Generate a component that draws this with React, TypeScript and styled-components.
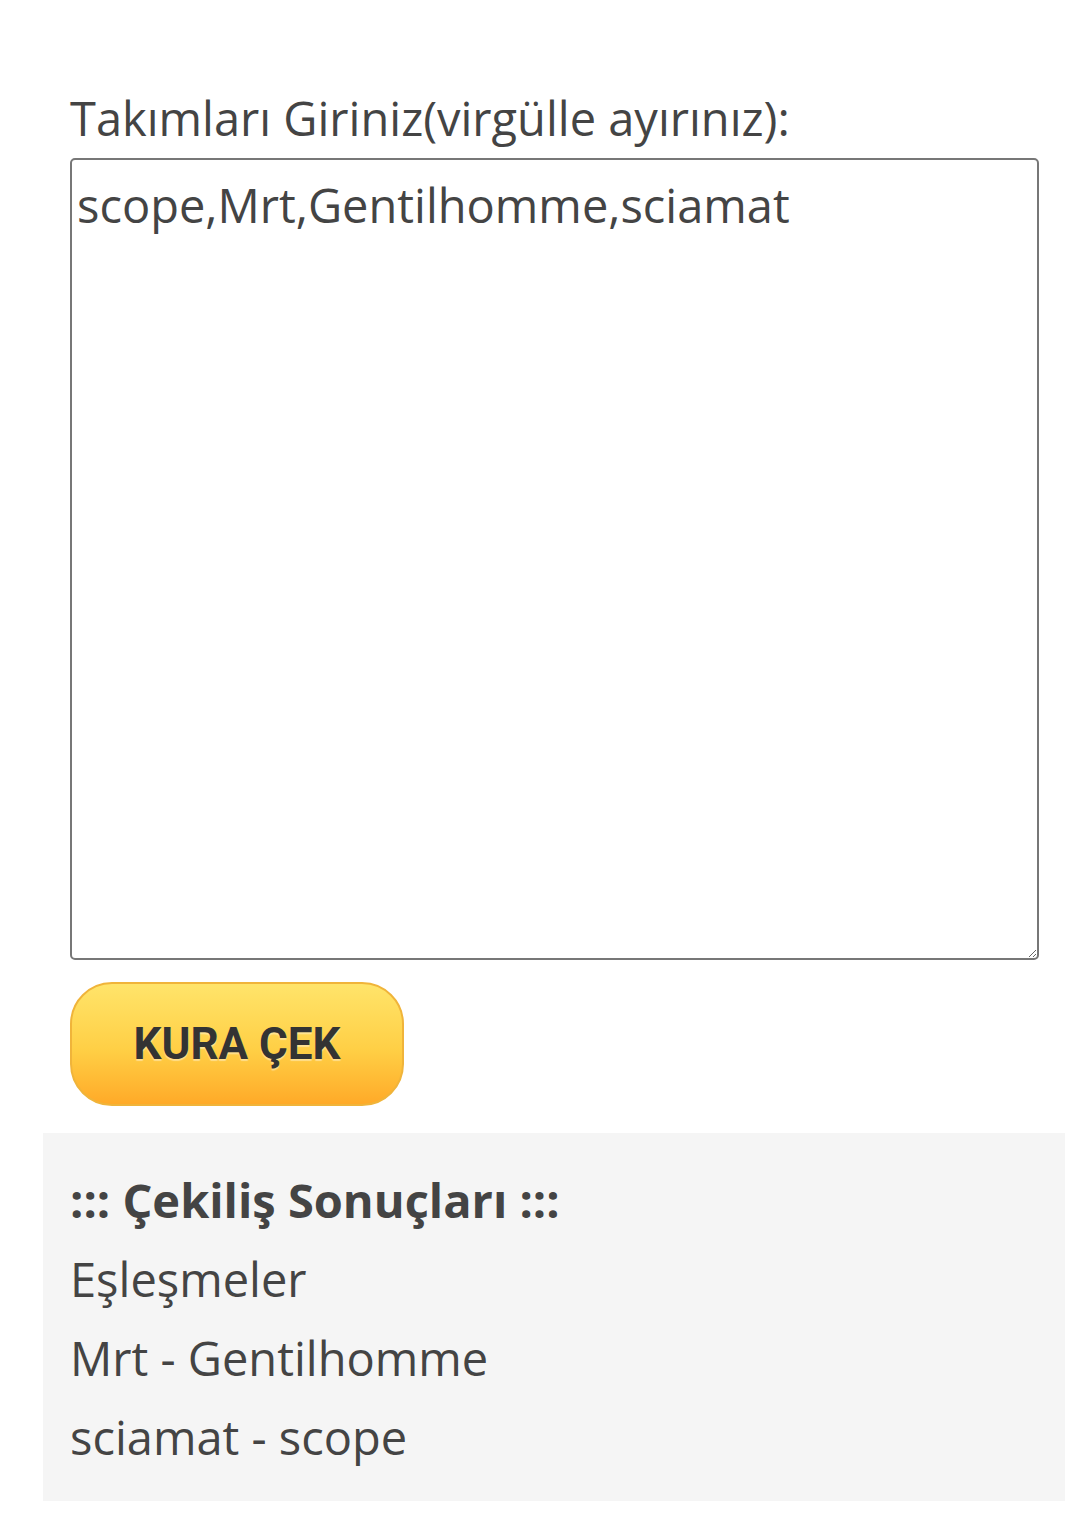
import styled, { createGlobalStyle } from "styled-components";

const GlobalStyle = createGlobalStyle`
  html, body {
    margin: 0;
    padding: 0;
    background: #fff;
  }
  body {
    font-family: "Open Sans", "Noto Sans", sans-serif;
    color: #444;
  }
`;

const Page = styled.div`
  padding: 85px 15px 16px 43px;
`;

const Form = styled.div`
  display: flex;
  flex-direction: column;
  padding: 0 27px;
`;

const Label = styled.label`
  font-size: 47px;
  line-height: 66px;
  color: #444;
  margin-bottom: 7px;
`;

const TeamsInput = styled.textarea`
  box-sizing: border-box;
  width: 969px;
  height: 802px;
  border: 2px solid #777;
  border-radius: 5px;
  padding: 12px 5px;
  font-family: "Open Sans", "Noto Sans", sans-serif;
  font-size: 47px;
  line-height: 66px;
  color: #444;
  resize: both;
  outline: none;
`;

const DrawButton = styled.button`
  box-sizing: border-box;
  margin-top: 22px;
  width: 334px;
  height: 124px;
  border: 2px solid #f0b43a;
  border-radius: 42px;
  background: linear-gradient(to bottom, #ffe46a 0%, #ffcf45 55%, #ffaa28 100%);
  font-family: Roboto, "Liberation Sans", sans-serif;
  font-weight: 700;
  font-size: 44px;
  color: #333;
  text-shadow: 0 2px 1px rgba(255, 255, 255, 0.4);
  cursor: pointer;
  padding: 0;
`;

const Results = styled.section`
  margin-top: 27px;
  background: #f5f5f5;
  padding: 28px 27px 24px;
`;

const ResultTitle = styled.div`
  font-size: 47px;
  line-height: 79px;
  font-weight: 700;
`;

const ResultLine = styled.div`
  font-size: 47px;
  line-height: 79px;
`;

const teams = ["scope", "Mrt", "Gentilhomme", "sciamat"];
const pairs = [
  ["Mrt", "Gentilhomme"],
  ["sciamat", "scope"],
];

export default function App() {
  return (
    <>
      <GlobalStyle />
      <Page>
        <Form>
          <Label>Takımları Giriniz(virgülle ayırınız):</Label>
          <TeamsInput defaultValue={teams.join(",")} />
          <div>
            <DrawButton>KURA ÇEK</DrawButton>
          </div>
        </Form>
        <Results>
          <ResultTitle>::: Çekiliş Sonuçları :::</ResultTitle>
          <ResultLine>Eşleşmeler</ResultLine>
          {pairs.map(([a, b]) => (
            <ResultLine key={a}>
              {a} - {b}
            </ResultLine>
          ))}
        </Results>
      </Page>
    </>
  );
}
